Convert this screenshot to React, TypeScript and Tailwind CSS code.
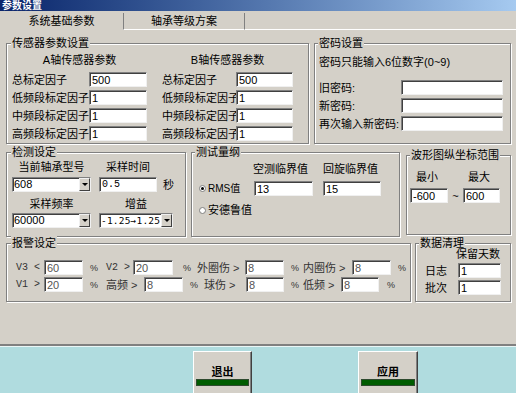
import React from "react";

// sunken 3D edit box look
const sunken =
  "bg-white border border-t-[#808080] border-l-[#808080] border-r-[#f0f0f0] border-b-[#f0f0f0] shadow-[inset_1px_1px_0_#404040]";

function Field({ value, className = "", mono = false, dim = false }: { value: string; className?: string; mono?: boolean; dim?: boolean }) {
  return (
    <input
      readOnly
      value={value}
      className={`${sunken} h-[15px] shrink-0 pl-[2px] outline-none ${
        mono ? "font-['Liberation_Mono',monospace] text-[10px]" : "text-[11px]"
      } ${dim ? "text-[#555]" : "text-black"} ${className}`}
    />
  );
}

function Combo({ value, className = "", mono = false }: { value: string; className?: string; mono?: boolean }) {
  return (
    <div className={`${sunken} h-[15px] shrink-0 flex ${className}`}>
      <span
        className={`flex-1 pl-[1px] leading-[13px] whitespace-nowrap overflow-hidden ${
          mono ? "font-['DejaVu_Sans_Mono',monospace] text-[9.5px] tracking-[0.2px]" : "text-[11px]"
        }`}
      >
        {value}
      </span>
      <span className="w-[11px] h-[13px] flex items-center justify-center bg-[#d4d0c8] border border-t-[#f0f0f0] border-l-[#f0f0f0] border-r-[#404040] border-b-[#404040]">
        <span className="border-x-[3px] border-x-transparent border-t-[3px] border-t-black" />
      </span>
    </div>
  );
}

function Group({ title, className = "", legend = "ml-[3px]", children }: { title: string; className?: string; legend?: string; children?: React.ReactNode }) {
  return (
    <fieldset className={`shrink-0 border border-[#808080] shadow-[inset_1px_1px_0_#fff,1px_1px_0_#fff] ${className}`}>
      <legend className={`${legend} px-[1px] leading-[14px] bg-[#d4d0c8]`}>{title}</legend>
      {children}
    </fieldset>
  );
}

function Radio({ checked }: { checked?: boolean }) {
  return (
    <span className="w-[7px] h-[7px] shrink-0 rounded-full bg-white border border-[#808080] flex items-center justify-center">
      {checked && <span className="w-[3px] h-[3px] rounded-full bg-black" />}
    </span>
  );
}

const sensorRows = [
  ["总标定因子", "500"],
  ["低频段标定因子", "1"],
  ["中频段标定因子", "1"],
  ["高频段标定因子", "1"],
];

function SensorCol({ title, labelW, inputW }: { title: string; labelW: string; inputW: string }) {
  return (
    <div className="flex flex-col">
      <div className="text-center">{title}</div>
      <div className="mt-[5px] flex flex-col gap-[3px]">
        {sensorRows.map(([label, value]) => (
          <div key={label} className="flex items-center h-[15px]">
            <span className={`${labelW} shrink-0 whitespace-nowrap`}>{label}</span>
            <Field value={value} className={inputW} />
          </div>
        ))}
      </div>
    </div>
  );
}

function Btn({ label, className = "" }: { label: string; className?: string }) {
  return (
    <div
      className={`h-[44px] shrink-0 flex flex-col items-center pt-[13px] bg-[#d4d0c8] border border-t-white border-l-white border-r-[#404040] border-b-[#404040] shadow-[inset_-1px_0_0_#808080] ${className}`}
    >
      <span className="font-bold leading-[14px]">{label}</span>
      <span className="self-stretch mx-[2px] h-[7px] bg-[#005c00] border border-[#2e4a2e]" />
    </div>
  );
}

const alarmText = "whitespace-nowrap shrink-0 text-[#333]";
const latin = "font-['Liberation_Mono',monospace] text-[10px]";

export default function App() {
  return (
    <div className="w-[516px] h-[393px] overflow-hidden flex flex-col bg-[#d4d0c8] text-black text-[11px] leading-[14px] font-['Liberation_Sans','Noto_Sans_CJK_SC',sans-serif]">
      {/* title bar */}
      <div className="h-[11px] shrink-0 bg-linear-to-r from-[#0a246a] to-[#a6caf0] pl-[2px] text-white font-bold text-[10px] leading-[11px]">
        参数设置
      </div>

      {/* tabs */}
      <div className="h-[19px] shrink-0 flex">
        <div className="w-[123px] flex items-center justify-center">系统基础参数</div>
        <div className="w-[122px] mt-[2px] border-x border-x-[#808080] border-b border-b-white flex items-center justify-center">
          轴承等级方案
        </div>
        <div className="flex-1 border-b border-white" />
      </div>

      <div className="flex-1 flex flex-col pl-[6px] pt-[6px]">
        {/* row 1 */}
        <div className="flex gap-[5px]">
          <Group title="传感器参数设置" legend="ml-[4px]" className="w-[303px] h-[108px]">
            <div className="flex pl-[5px] gap-[15px] mt-[3px]">
              <SensorCol title="A轴传感器参数" labelW="w-[77px]" inputW="w-[58px]" />
              <SensorCol title="B轴传感器参数" labelW="w-[74px]" inputW="w-[57px]" />
            </div>
          </Group>
          <Group title="密码设置" className="w-[197px] h-[108px]">
            <div className="pl-[4px] mt-[5px] whitespace-nowrap">密码只能输入6位数字(0~9)</div>
            <div className="mt-[11px] pl-[4px] flex flex-col gap-[3px]">
              {["旧密码:", "新密码:", "再次输入新密码:"].map((l) => (
                <div key={l} className="flex items-center h-[15px]">
                  <span className="w-[82px] shrink-0 whitespace-nowrap">{l}</span>
                  <Field value="" className="w-[102px]" />
                </div>
              ))}
            </div>
          </Group>
        </div>

        {/* row 2 */}
        <div className="flex items-start mt-[1px]">
          <Group title="检测设定" legend="ml-[4px]" className="w-[180px] h-[92px]">
            <div className="flex pl-[5px] mt-[1px]">
              <div className="w-[79px] text-center">当前轴承型号</div>
              <div className="ml-[8px] w-[58px] text-center">采样时间</div>
            </div>
            <div className="flex items-center pl-[5px] mt-[3px]">
              <Combo value="608" className="w-[79px]" />
              <Field value="0.5" mono className="ml-[8px] w-[58px]" />
              <span className="ml-[6px]">秒</span>
            </div>
            <div className="flex pl-[5px] mt-[5px]">
              <div className="w-[79px] text-center">采样频率</div>
              <div className="ml-[8px] w-[74px] text-center">增益</div>
            </div>
            <div className="flex items-center pl-[5px] mt-[2px]">
              <Combo value="60000" className="w-[79px]" />
              <Combo value="-1.25→1.25" mono className="ml-[8px] w-[74px]" />
            </div>
          </Group>

          <Group title="测试量纲" className="ml-[5px] w-[209px] h-[92px]">
            <div className="flex pl-[61px] mt-[3px]">
              <div className="w-[70px]">空测临界值</div>
              <div>回旋临界值</div>
            </div>
            <div className="flex items-center pl-[7px] mt-[5px]">
              <div className="w-[55px] flex items-center">
                <Radio checked />
                <span className="ml-[2px] text-[10px]">RMS值</span>
              </div>
              <Field value="13" className="w-[59px]" />
              <Field value="15" className="ml-[10px] w-[58px]" />
            </div>
            <div className="flex items-center pl-[7px] mt-[7px]">
              <Radio />
              <span className="ml-[2px]">安德鲁值</span>
            </div>
          </Group>

          <Group title="波形图纵坐标范围" className="ml-[6px] mt-[3px] w-[105px] h-[87px]">
            <div className="flex pl-[9px] mt-[8px]">
              <div className="w-[52px]">最小</div>
              <div>最大</div>
            </div>
            <div className="flex items-center pl-[3px] mt-[4px]">
              <Field value="-600" className="w-[38px]" />
              <span className="w-[15px] text-center">~</span>
              <Field value="600" className="w-[37px]" />
            </div>
          </Group>
        </div>

        {/* row 3 */}
        <div className="flex -mt-[1px] gap-[4px]">
          <Group title="报警设定" legend="ml-[4px]" className="w-[405px] h-[66px]">
            <div className="flex items-center h-[15px] pl-[9px] mt-[10px]">
              <span className={`${alarmText} ${latin} w-[28px]`}>V3 &lt;</span>
              <Field value="60" dim className="w-[39px]" />
              <span className={`${alarmText} text-[9px] w-[23px] pl-[7px]`}>%</span>
              <span className={`${alarmText} ${latin} w-[27px]`}>V2 &gt;</span>
              <Field value="20" dim className="w-[40px]" />
              <span className={`${alarmText} text-[9px] w-[24px] pl-[10px]`}>%</span>
              <span className={`${alarmText} w-[48px]`}>外圈伤 &gt;</span>
              <Field value="8" dim className="w-[39px]" />
              <span className={`${alarmText} text-[9px] w-[19px] pl-[7px]`}>%</span>
              <span className={`${alarmText} w-[49px]`}>内圈伤 &gt;</span>
              <Field value="8" dim className="w-[39px]" />
              <span className={`${alarmText} text-[9px] pl-[7px]`}>%</span>
            </div>
            <div className="flex items-center h-[15px] pl-[9px] mt-[2px]">
              <span className={`${alarmText} ${latin} w-[28px]`}>V1 &gt;</span>
              <Field value="20" dim className="w-[39px]" />
              <span className={`${alarmText} text-[9px] w-[23px] pl-[7px]`}>%</span>
              <span className={`${alarmText} w-[38px]`}>高频 &gt;</span>
              <Field value="8" dim className="w-[39px]" />
              <span className={`${alarmText} text-[9px] w-[21px] pl-[7px]`}>%</span>
              <span className={`${alarmText} w-[42px]`}>球伤 &gt;</span>
              <Field value="8" dim className="w-[38px]" />
              <span className={`${alarmText} text-[9px] w-[19px] pl-[7px]`}>%</span>
              <span className={`${alarmText} w-[38px]`}>低频 &gt;</span>
              <Field value="8" dim className="w-[38px]" />
              <span className={`${alarmText} text-[9px] pl-[8px]`}>%</span>
            </div>
          </Group>

          <Group title="数据清理" className="w-[96px] h-[66px]">
            <div className="pl-[40px] -mt-[1px] leading-[11px]">保留天数</div>
            <div className="mt-[3px] pl-[9px] flex flex-col gap-[2px]">
              {["日志", "批次"].map((l) => (
                <div key={l} className="flex items-center h-[15px]">
                  <span className="w-[33px] shrink-0">{l}</span>
                  <Field value="1" className="w-[43px]" />
                </div>
              ))}
            </div>
          </Group>
        </div>
      </div>

      {/* bottom button bar */}
      <div className="h-[49px] shrink-0 border-t-2 border-[#808080] bg-[#b0dcdf] shadow-[inset_0_1px_0_#eaf6f6] flex items-start pl-[193px] pt-[5px]">
        <Btn label="退出" className="w-[59px]" />
        <Btn label="应用" className="ml-[106px] w-[60px]" />
      </div>
    </div>
  );
}
